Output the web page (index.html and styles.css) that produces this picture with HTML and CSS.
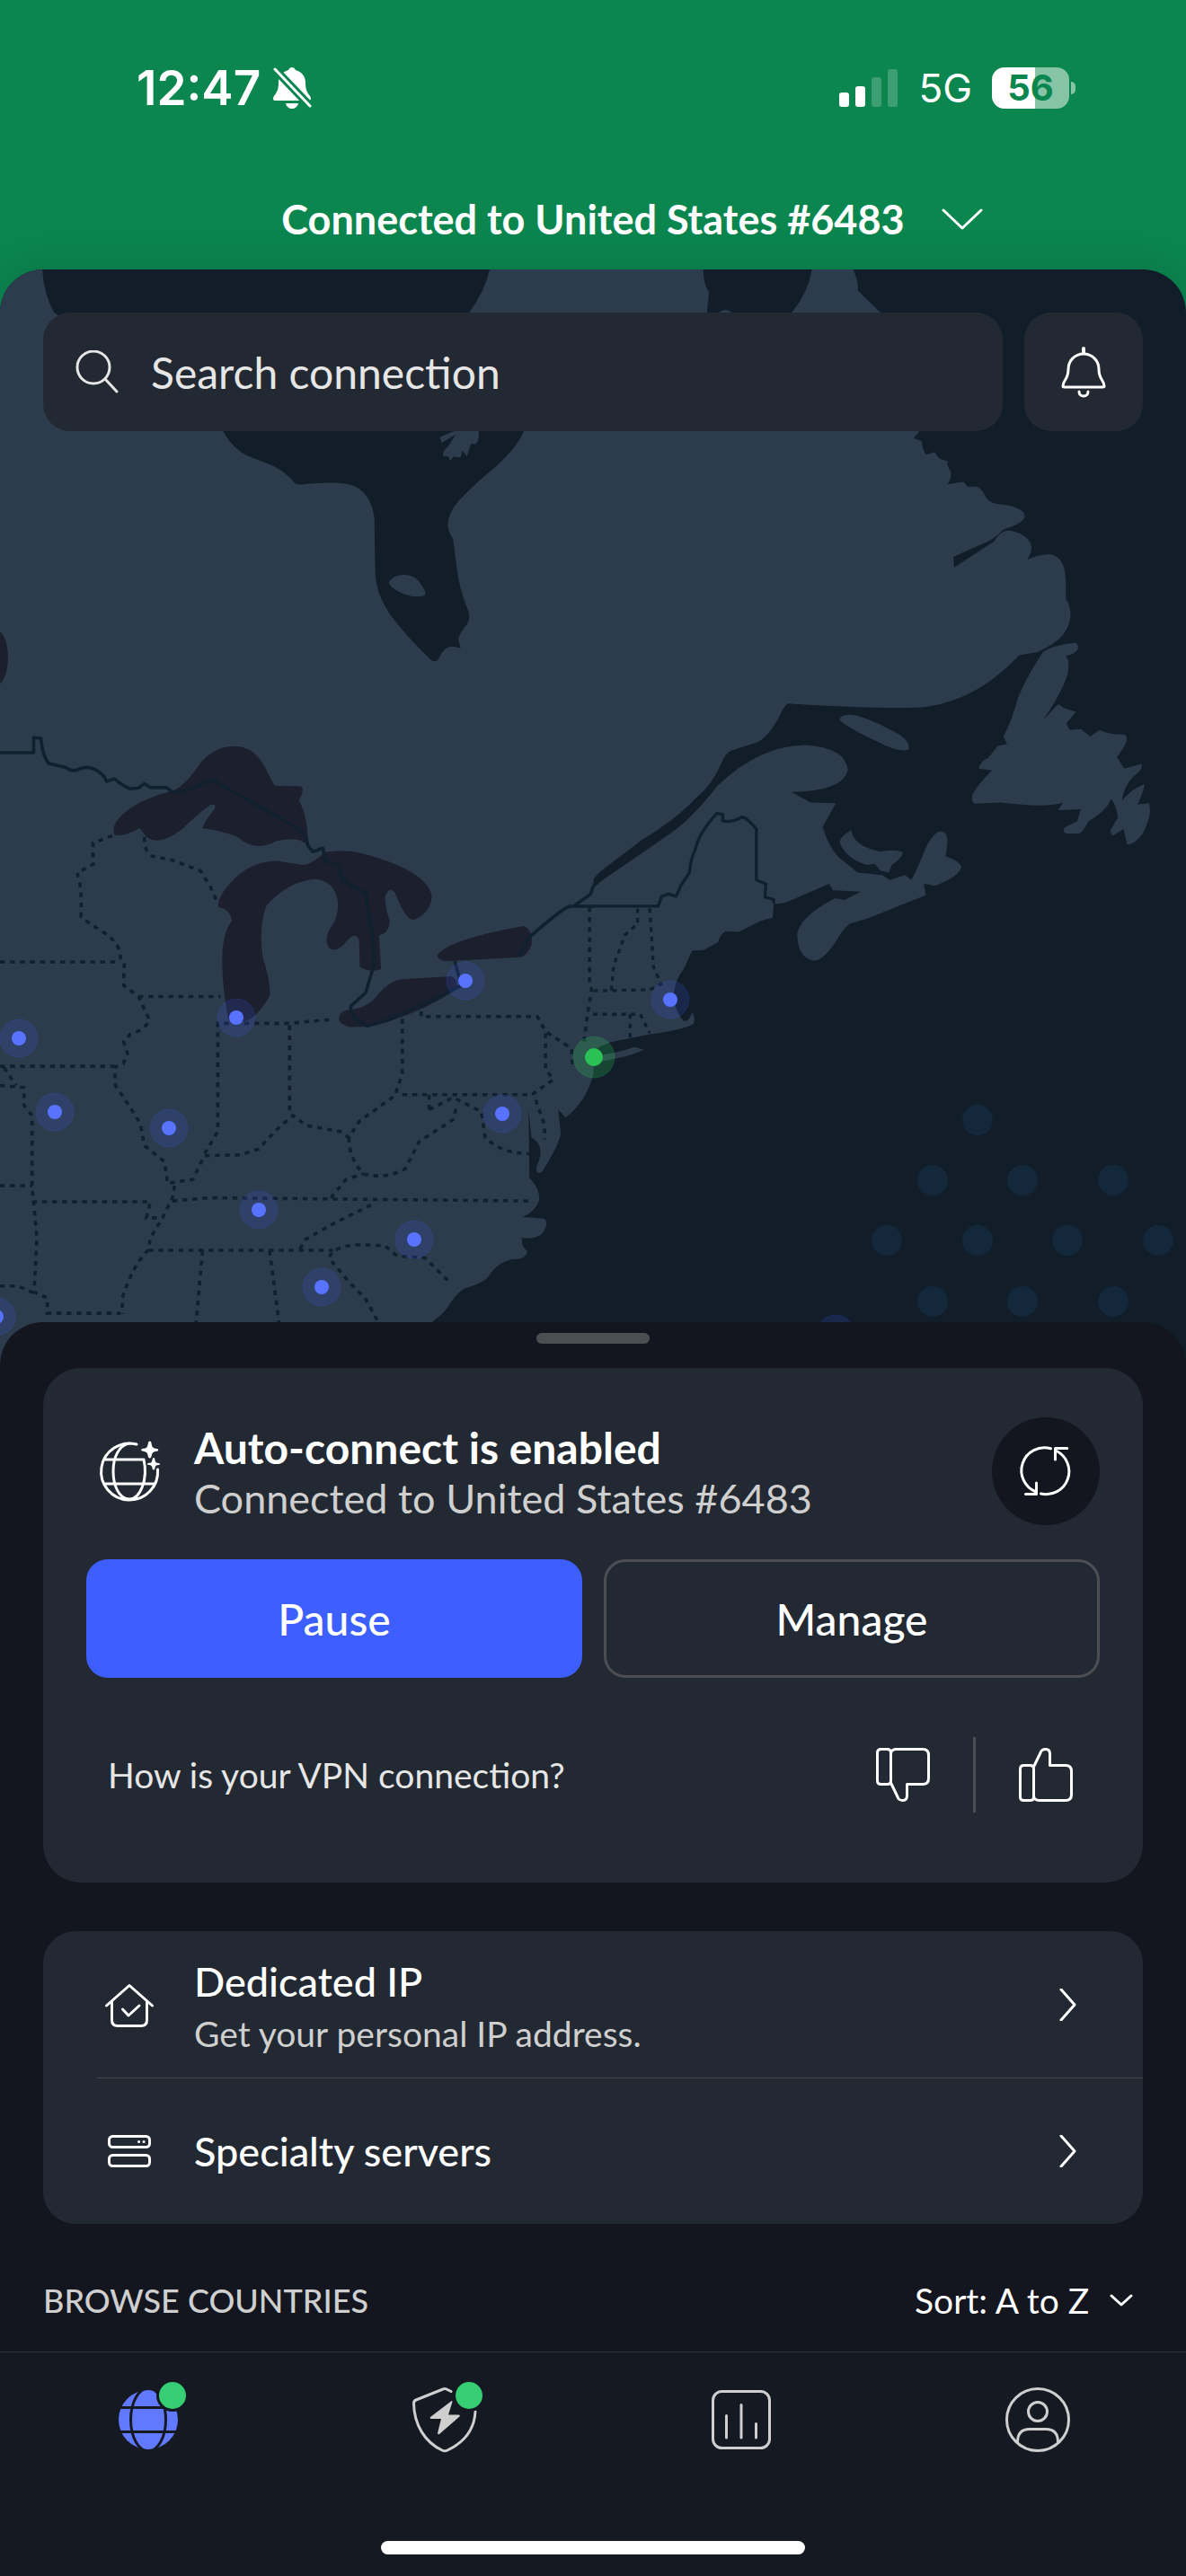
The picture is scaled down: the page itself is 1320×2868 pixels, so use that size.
FILE: index.html
```html
<!DOCTYPE html>
<html lang="en">
<head>
<meta charset="utf-8">
<meta name="viewport" content="width=device-width, initial-scale=1">
<title>VPN connection</title>
<link rel="stylesheet" href="styles.css">
</head>
<body>
<header class="header">
  <div class="status">
    <span class="status-time">12:47</span>
    <svg class="status-bell" width="44" height="48" viewBox="0 0 44 48" aria-label="Silent mode">
      <path fill="#fff" d="M22 1c2 0 3 1 4 3 7 2 11 7 11 14 0 8 2 11 5 15 2 3 1 5-2 5H4c-3 0-4-2-2-5 3-4 5-7 5-15C7 11 11 6 18 4c1-2 2-3 4-3zM15 41h14c-1 4-4 6-7 6s-6-2-7-6z"/>
      <path stroke="#0b864f" stroke-width="9" d="M0 0 44 46"/>
      <path stroke="#fff" stroke-width="3" stroke-linecap="round" d="M3 3 42 44"/>
    </svg>
    <span class="status-gap"></span>
    <svg class="status-signal" width="66" height="42" viewBox="0 0 66 42" aria-label="Signal strength">
      <g fill="#fff"><rect y="26" width="11" height="16" rx="3"/><rect x="18" y="19" width="11" height="23" rx="3"/><g opacity=".2"><rect x="36" y="9" width="11" height="33" rx="3"/><rect x="54" width="11" height="42" rx="3"/></g></g>
    </svg>
    <span class="status-net">5G</span>
    <span class="battery"><span class="battery-level">56</span></span>
  </div>
  <button class="title" type="button">
    <span class="title-text">Connected to United States #6483</span>
    <svg width="72" height="72" viewBox="0 0 72 72" class="line"><path d="m15 26 21 20 21-20"/></svg>
  </button>
</header>

<main class="main">
  <section class="map">
    <svg class="map-art" viewBox="0 300 1320 1220" preserveAspectRatio="xMidYMin slice" role="img" aria-label="Server map">
      <!-- mainland -->
      <g class="land">
        <path transform="translate(0 780) scale(.4464)" d="M1480-1100V930Q1462 1000 1410 1040L1392 1020 1398 1080Q1395 1105 1352 1175 1335 1185 1338 1162 1362 1110 1325 1090L1318 1020 1320 1190Q1345 1215 1345 1245 1335 1275 1303 1288L1355 1292Q1370 1300 1355 1325 1340 1345 1300 1340L1303 1360 1315 1375Q1310 1395 1280 1393 1240 1400 1215 1440 1200 1455 1160 1465 1135 1480 1115 1515 1100 1535 1070 1555L1020 1680H-10V-1100Z"/>
        <path transform="translate(660 460) scale(.4209)" d="M-3-400H680Q705-345 700-325L760-266 830-20 862 50 848 66 870 75Q870 100 882 110L903 103 915 120 938 127Q935 140 946 155 948 175 937 188L980 182 990 194 1015 194Q1030 200 1040 225 1052 240 1085 242 1140 250 1142 273 1140 290 1085 308 1060 335 1020 350L953 380 955 408 1060 340Q1075 312 1100 310 1155 320 1160 355 1160 368 1148 388 1175 375 1205 373 1240 375 1248 420 1252 450 1250 490 1280 540 1240 590 1215 615 1175 632L1127 640Q1080 690 1025 725 960 765 880 777 800 785 515 768 505 775 495 798 465 855 435 870L365 893Q350 900 340 925 315 985 270 1020 225 1070 125 1132L25 1208Q3 1225-3 1243V1262Q10 1244 50 1218L200 1115Q260 1075 330 985 440 880 560 878 670 885 674 945 660 1000 525 1002L575 1030 642 1032 607 1095Q625 1150 650 1175L700 1215 765 1222 785 1235 825 1222 842 1235Q860 1200 880 1150 905 1100 925 1107 945 1112 932 1172 970 1185 974 1200 970 1225 905 1250L875 1245 880 1275 730 1335 680 1350Q665 1360 650 1385 610 1450 583 1448 540 1440 540 1375 550 1330 640 1283L665 1288 708 1266 635 1262 625 1245 520 1290Q500 1300 478 1297L475 1335Q440 1340 415 1358L385 1372 350 1370Q335 1380 330 1400L292 1420 262 1422 240 1470Q215 1500 213 1545 220 1590 240 1608 255 1610 262 1584 272 1600 266 1615 245 1630 150 1643L50 1663 20 1675-3 1690Z"/>
      </g>
      <!-- bays -->
      <g class="water">
        <path transform="translate(0 460) scale(.4209 .3333)" d="M112-480Q115-400 143-336L300-200 590 60Q610 110 650 140L720 175Q760 200 780 235 785 240 800 238 900 225 935 243 980 265 990 350L992 530Q993 600 1030 670 1070 740 1140 825 1152 835 1160 820 1175 775 1200 780L1218 785 1212 755Q1215 735 1235 705 1245 685 1238 660 1215 590 1208 520L1198 420Q1185 395 1184 375 1185 330 1215 290 1260 230 1310 180 1370 110 1385 60L1350-150 1240-336Q1280-400 1295-480Z"/>
        <path d="M783 298Q782 315 789 325L787 347 800 370 870 370 882 347Q900 325 904 298Z"/>
      </g>
      <!-- islands -->
      <g class="land">
        <path d="M796 352Q808 338 818 352Z"/>
        <path transform="translate(0 460) scale(.4209 .3333)" d="M1028 565Q1040 540 1070 540 1100 540 1115 575 1130 600 1122 610 1100 618 1070 605 1030 585 1028 565ZM1163 80 1200 60H1266Q1268 90 1258 103L1245 103 1235 145 1222 125 1218 148 1200 145 1190 160 1186 145 1172 145Q1168 130 1185 110L1205 72 1168 98Z"/>
        <g transform="translate(660 460) scale(.4209)">
          <path d="M652 810Q655 795 690 798 740 810 810 850 840 870 835 890 810 900 750 868 660 825 652 810Z"/>
          <path d="M1190 632Q1210 615 1275 607 1285 612 1282 625 1275 638 1250 642 1262 655 1255 690 1240 740 1190 812L1230 770 1245 780 1277 790 1252 820 1260 838 1290 836 1315 855 1340 838Q1360 850 1405 850 1425 860 1385 910L1405 940 1450 928Q1458 940 1430 960 1405 985 1398 1025 1430 990 1458 982 1460 990 1440 1035L1470 1032Q1480 1060 1455 1110 1430 1145 1412 1140L1403 1100 1375 1117Q1365 1112 1370 1100L1388 1070Q1385 1040 1370 1020 1360 1050 1310 1080 1295 1110 1285 1112L1250 1112Q1240 1105 1248 1095L1280 1080 1290 1048 1230 1050 1243 1030Q1200 1045 1080 1030L1010 1033Q1000 1028 1003 1010 1015 985 1055 945L1020 940Q1025 920 1045 912L1070 880 1095 875 1085 855Q1105 820 1125 750 1145 700 1190 632Z"/>
          <path d="M683 1103Q688 1145 760 1160 800 1152 820 1162 815 1180 790 1195L782 1215 760 1210 745 1192 725 1195Q670 1180 652 1135 655 1118 683 1103Z"/>
          <path d="M0 1715V1700Q60 1695 110 1677L135 1684Q100 1700 60 1707L0 1719Z"/>
        </g>
      </g>
      <!-- lakes and borders -->
      <ellipse class="lake" cx="-6" cy="732" rx="15" ry="32"/>
      <g transform="translate(0 780) scale(.4464)">
        <g class="lake">
          <path d="M285 335Q275 310 310 280 350 245 430 225 460 215 500 155 540 110 590 114 640 115 670 185L685 212 750 214Q762 220 745 248 768 290 768 360L745 347Q715 343 690 350 645 375 605 350 585 330 505 318 510 300 535 270 540 255 525 260 490 285 455 320 400 365 365 340L348 318Q310 340 285 335Z"/>
          <path d="M545 515Q540 495 570 460 620 400 690 400L755 410Q775 410 810 378 850 370 900 380 1070 425 1077 490 1070 535 1030 547 1010 545 985 480 970 460 960 490 960 515 972 550 970 580 945 585L950 670Q925 680 897 665L895 595Q885 575 865 600 840 630 822 618 805 595 825 565 845 540 842 500 835 450 785 445 720 450 665 510 645 560 655 640 675 700 673 735 655 770 630 790 600 810 570 795 550 700 555 620 560 570 578 550 575 520 545 515Z"/>
          <path d="M845 795Q845 770 880 770 920 765 945 730 970 700 1000 695L1125 688Q1150 700 1130 725 1060 770 990 793 930 818 870 814 845 805 845 795Z"/>
          <path d="M1090 635Q1120 595 1305 562 1330 570 1325 610 1315 635 1300 640L1110 650Q1090 645 1090 635Z"/>
        </g>
        <g class="border">
          <path d="M0 130H84V92L102 94Q106 140 122 157L165 167Q180 180 200 170 230 158 260 190L266 202 285 195Q310 215 325 220L345 218 360 207 375 217H415L430 228 460 226 530 198 745 320Q765 335 768 362L780 377 805 368 810 400 848 412 850 445 912 482Q915 520 925 560 935 620 932 660L912 728 875 762Q870 790 915 812 1000 790 1150 710L1134 650M1295 635 1320 590Q1400 520 1420 513H1482M1430 513 1472 483 1482 456"/>
        </g>
        <g class="state">
          <path d="M280 337 232 355V408L192 430Q205 460 202 540L245 570Q300 600 300 640L310 655 308 710 345 738 372 795Q365 820 325 832L308 850 318 880 308 905 285 915 288 960 325 1015 350 1055 360 1110 410 1150 418 1205 440 1200 480 1195 510 1135 600 1133 645 1118 690 1070 730 1035 765 1060 850 1075 870 1090 895 1050 985 985 1003 930V790"/>
          <path d="M0 652H300M0 912H285M345 738H550M360 340Q360 380 380 388L430 398 500 425 525 465 540 500M510 1130 543 1075V805H722L830 795M722 810V1035"/>
          <path d="M870 1090Q870 1140 905 1180 960 1195 1010 1168L1045 1100 1130 1045 1140 1005M1003 983H1325M1070 1020V983M1070 1020 1130 990 1200 1025 1210 1090Q1250 1130 1320 1130M1050 775V788H1340L1360 825 1425 868 1428 920M1360 830V920L1380 945 1330 980 1358 1060V1095"/>
          <path d="M1470 515V700L1475 722 1465 780 1455 860M80 1250H375L365 1290H400M430 1248 520 1240 1320 1248M0 960 60 965V1010L80 1035V1210L92 1340 85 1475 118 1490V1528H300M0 1210H80M10 915 40 960M0 1460H45L85 1478"/>
          <path d="M435 1210 430 1240 405 1290 375 1340 370 1370Q330 1410 305 1490V1530M370 1371H830M505 1372 488 1560M672 1372 697 1560M825 1240 862 1195 905 1180M925 1258 830 1305 760 1345 748 1368M940 1545 910 1490 870 1450 820 1390Q830 1360 900 1357L960 1360 990 1385 1060 1390 1120 1450"/>
        </g>
      </g>
      <g transform="translate(660 460) scale(.4209)">
        <path class="border" d="M-6 1304H172L182 1278 200 1272 220 1278 232 1250 255 1215Q258 1180 270 1155 280 1110 328 1058L343 1062V1078Q365 1085 395 1068 410 1072 432 1100V1235L457 1245 455 1280 478 1287V1297"/>
        <path class="state" d="M118 1310V1350L85 1380 55 1460 48 1528M150 1310 160 1465 180 1510 150 1525 0 1528M0 1590H125L150 1640M98 1590V1655"/>
      </g>
      <!-- ocean dots -->
      <g class="dots">
        <circle cx="1088" cy="1247" r="17"/><circle cx="1038" cy="1314" r="17"/><circle cx="1138" cy="1314" r="17"/><circle cx="1239" cy="1314" r="17"/>
        <circle cx="987" cy="1381" r="17"/><circle cx="1088" cy="1381" r="17"/><circle cx="1188" cy="1381" r="17"/><circle cx="1289" cy="1381" r="17"/>
        <circle cx="1038" cy="1449" r="17"/><circle cx="1138" cy="1449" r="17"/><circle cx="1239" cy="1449" r="17"/>
      </g>
      <!-- server pins -->
      <g class="halo">
        <circle cx="21" cy="1156" r="21"/><circle cx="61" cy="1238" r="21"/><circle cx="188" cy="1256" r="21"/><circle cx="263" cy="1133" r="21"/><circle cx="518" cy="1092" r="21"/><circle cx="559" cy="1240" r="21"/><circle cx="288" cy="1347" r="21"/><circle cx="461" cy="1380" r="21"/><circle cx="358" cy="1433" r="21"/><circle cx="-4" cy="1466" r="21"/><circle cx="746" cy="1113" r="21"/><circle cx="930" cy="1485" r="21"/>
      </g>
      <g class="pin">
        <circle cx="21" cy="1156" r="8"/><circle cx="61" cy="1238" r="8"/><circle cx="188" cy="1256" r="8"/><circle cx="263" cy="1133" r="8"/><circle cx="518" cy="1092" r="8"/><circle cx="559" cy="1240" r="8"/><circle cx="288" cy="1347" r="8"/><circle cx="461" cy="1380" r="8"/><circle cx="358" cy="1433" r="8"/><circle cx="-4" cy="1466" r="8"/><circle cx="746" cy="1113" r="8"/>
      </g>
      <circle class="halo-on" cx="661" cy="1177" r="23"/><circle class="pin-on" cx="661" cy="1177" r="10"/>
    </svg>
    <div class="toolbar">
      <label class="search">
        <svg width="48" height="48" viewBox="0 0 48 48" class="line light"><circle cx="20" cy="19" r="18"/><path d="m33 32 13 14"/></svg>
        <input type="search" placeholder="Search connection" aria-label="Search connection">
      </label>
      <button class="bell" type="button" aria-label="Notifications">
        <svg width="72" height="72" viewBox="0 0 72 72" class="line"><path stroke-width="4" d="M36 10v5"/><path d="M36 16C26 16 19 24 19 33c0 12-6 12-6 19 0 1 1 1 2 1h42c1 0 2 0 2-1 0-7-6-7-6-19 0-9-7-17-17-17zM31 58c0 3 2 5 5 5s5-2 5-5"/></svg>
      </button>
    </div>
  </section>

  <section class="sheet">
    <div class="handle"></div>
    <article class="card">
      <div class="card-head">
        <svg width="72" height="72" viewBox="0 0 72 72" class="line">
          <path d="M44 6A31.500 31.500 0 1 0 67.500 34M9 23H52M9 50H64M36 5C24 7 18 21 18 36S24 67 36 67C48 67 57 45 52 23"/>
          <path fill="#fff" stroke="none" d="M58.700 2.500c2.500 0 1.500 5 3.500 7s6 .5 6 2.800-4 1-6 3-1 6.200-3.500 6.200-1.500-4.200-3.500-6.200-6-.7-6-3 4-.8 6-2.800 1-7 3.500-7zM63 21c2 0 1 3.500 2.500 5s4.500.3 4.500 2-3 .5-4.500 2-.5 4.500-2.500 4.500-1-3-2.500-4.500-4.500-.3-4.500-2 3-.5 4.500-2 .5-5 2.500-5z"/>
        </svg>
        <div class="card-text">
          <h1>Auto-connect is enabled</h1>
          <p>Connected to United States #6483</p>
        </div>
        <button class="sync" type="button" aria-label="Reconnect">
          <svg width="72" height="72" viewBox="0 0 72 72" class="line"><path d="M41.500 10.800A25.500 25.500 0 0 0 25 59M48 13.500A25.500 25.500 0 0 1 30.500 61M59.700 10.500H46.500V23M13.500 61.500H25.500V49"/></svg>
        </button>
      </div>
      <div class="actions">
        <button class="btn btn-primary" type="button">Pause</button>
        <button class="btn" type="button">Manage</button>
      </div>
      <div class="feedback">
        <p>How is your VPN connection?</p>
        <button type="button" class="icon-btn" aria-label="Bad connection">
          <svg width="72" height="72" viewBox="0 0 72 72" class="line"><path id="thumb" d="M11.500 7.500h7q4 0 4 4v31q0 4-4 4h-7q-4 0-4-4v-31q0-4 4-4zM22.500 12q1-4.500 6-4.500H58q6.500 0 6.500 6.500V40q0 6.500-6.500 6.500H40.500V59q0 5.500-4.500 5.500-5 0-6-4L22.500 45"/></svg>
        </button>
        <span class="rule"></span>
        <button type="button" class="icon-btn" aria-label="Good connection">
          <svg width="72" height="72" viewBox="0 0 72 72" class="line"><use href="#thumb" transform="matrix(1 0 0 -1 0 72)"/></svg>
        </button>
      </div>
    </article>

    <nav class="list">
      <a class="row" href="#dedicated-ip">
        <svg width="72" height="72" viewBox="0 0 72 72" class="line"><path d="M10.500 37 36 14.500 61.500 37M16.500 32V53q0 6.500 6.500 6.500H49q6.500 0 6.500-6.500V32M28.500 41l6.500 7 12-11"/></svg>
        <span class="row-text"><span class="row-title">Dedicated IP</span><span class="row-sub">Get your personal IP address.</span></span>
        <svg width="36" height="36" viewBox="0 0 36 36" class="line"><path d="m11 1 15 17-15 17"/></svg>
      </a>
      <a class="row" href="#specialty-servers">
        <svg width="72" height="72" viewBox="0 0 72 72" class="line"><rect x="13.500" y="19.500" width="45" height="12" rx="4"/><rect x="13.500" y="40.500" width="45" height="12" rx="4"/><path d="M46.500 25.500h.1M52 25.500h.1"/></svg>
        <span class="row-text"><span class="row-title">Specialty servers</span></span>
        <svg width="36" height="36" viewBox="0 0 36 36" class="line"><path d="m11 1 15 17-15 17"/></svg>
      </a>
    </nav>

    <div class="browse">
      <h2>BROWSE COUNTRIES</h2>
      <label class="sort">
        <select aria-label="Sort countries"><option>Sort: A to Z</option></select>
        <svg width="48" height="48" viewBox="0 0 48 48" class="line"><path d="m13 19 11 10 11-10"/></svg>
      </label>
    </div>
  </section>
</main>

<nav class="tabs">
  <div class="tabs-row">
    <a href="#vpn" aria-label="VPN">
      <svg width="72" height="72" viewBox="0 0 72 72">
        <circle cx="36" cy="36" r="33" fill="#6079ff"/>
        <path fill="none" stroke="#151a22" stroke-width="3" d="M0 22.500H72M0 49.500H72"/><ellipse cx="36" cy="36" rx="19.500" ry="35" fill="none" stroke="#151a22" stroke-width="3"/>
        <circle cx="63" cy="9" r="18" fill="#151a22"/><circle cx="63" cy="9" r="15" fill="#35ce72"/>
      </svg>
    </a>
    <a href="#threat-protection" aria-label="Threat protection">
      <svg width="72" height="72" viewBox="0 0 72 72">
        <path class="muted" d="M43 4.500 38 2q-2-1-4 0L4 14Q1.500 15 1.500 18C2 42 14 61 33 70q3 1.500 6 0C58 61 69 46 70 27"/>
        <path fill="#cfcfcf" d="M43 15.500 20 33q-1 1.500 1 2h11L28 51q.5 2 2 1L52.500 32.500q1-2-1-2H40L44.500 16q0-1.500-1.500-.5z"/>
        <circle cx="63" cy="9" r="18" fill="#151a22"/><circle cx="63" cy="9" r="15" fill="#35ce72"/>
      </svg>
    </a>
    <a href="#stats" aria-label="Statistics">
      <svg width="72" height="72" viewBox="0 0 72 72"><g class="muted"><rect x="4.500" y="4.500" width="63" height="63" rx="10"/><path d="M19.500 31.500V56M36 19.500V56M52.500 40.500V56"/></g></svg>
    </a>
    <a href="#profile" aria-label="Profile">
      <svg width="72" height="72" viewBox="0 0 72 72"><g class="muted"><circle cx="36" cy="36" r="34.500"/><circle cx="36" cy="27" r="10.500"/><path d="M13.500 61V60Q14 46.500 27 46.500H45Q58 46.500 58.500 60V61"/></g></svg>
    </a>
  </div>
  <div class="home-bar"></div>
</nav>
</body>
</html>
```
FILE: styles.css
```css
* { box-sizing: border-box; margin: 0; }

body {
  display: flex;
  flex-direction: column;
  min-height: 100vh;
  background: #0b864f;
  color: #fff;
  font-family: Lato, "Liberation Sans", sans-serif;
  font-size: 45px;
}

button, input, select {
  border: 0;
  padding: 0;
  background: none;
  color: inherit;
  font: inherit;
}
a { color: inherit; text-decoration: none; }
svg { display: block; flex: none; }

.line {
  fill: none;
  stroke: #fff;
  stroke-width: 3;
  stroke-linecap: round;
  stroke-linejoin: round;
}
.light { stroke: #e6e6e6; }

/* header */
.header { display: flex; flex-direction: column; height: 300px; }
.status {
  display: flex;
  align-items: center;
  padding: 66px 130px 0 152px;
  line-height: 64px;
  font-family: Inter, "Liberation Sans", sans-serif;
}
.status-time { font-size: 53px; font-weight: 600; }
.status-bell { margin-left: 13px; }
.status-gap { flex: 1; }
.status-net { margin: 0 22px; font-size: 44px; font-weight: 400; }
.battery {
  position: relative;
  width: 86px;
  height: 46px;
  border-radius: 14px;
  background: linear-gradient(90deg, #fff 56%, #87c4a6 56%);
  color: #0b864f;
  font-size: 40px;
  font-weight: 700;
  line-height: 46px;
  text-align: center;
}
.battery::after {
  content: "";
  position: absolute;
  left: 88px;
  top: 16px;
  width: 5px;
  height: 14px;
  border-radius: 0 5px 5px 0;
  background: #87c4a6;
}
.title {
  display: grid;
  grid-template-columns: 1fr auto 1fr;
  align-items: center;
  column-gap: 28px;
  margin-top: 78px;
  font-weight: 700;
}
.title-text { grid-column: 2; }

/* map */
.main { display: flex; flex: 1; flex-direction: column; }
.map {
  position: relative;
  flex: 1;
  min-height: 600px;
  padding: 48px;
  border-radius: 48px 48px 0 0;
  overflow: hidden;
  background: #111d28;
  box-shadow: 0 0 48px rgba(17, 29, 40, .2);
}
.map-art { position: absolute; inset: 0; width: 100%; height: 100%; }
.land { fill: #2d3c4c; }
.water { fill: #111d28; }
.lake { fill: #1c1f2e; }
.border { fill: none; stroke: #10202f; stroke-width: 8; stroke-linejoin: round; }
.state { fill: none; stroke: #10202f; stroke-width: 8; stroke-dasharray: 12 13; }
.dots { fill: #14283b; }
.halo { fill: #3e5fff; fill-opacity: .16; stroke: #3e5fff; stroke-opacity: .16; stroke-width: 1; }
.pin { fill: #5873ff; }
.halo-on { fill: #2bc155; fill-opacity: .25; stroke: #2bc155; stroke-opacity: .2; }
.pin-on { fill: #2bc155; }

.toolbar { position: relative; display: flex; gap: 24px; }
.search, .bell {
  height: 132px;
  border-radius: 30px;
  background: #232932;
}
.search { display: flex; flex: 1; align-items: center; gap: 36px; padding: 0 36px; }
.search input { flex: 1; min-width: 0; font-size: 48px; outline: 0; }
.search input::placeholder { color: #e6e6e6; opacity: 1; }
.bell { display: grid; place-items: center; width: 132px; }

/* bottom sheet */
.sheet {
  position: relative;
  margin-top: -48px;
  padding: 12px 48px 24px;
  border-radius: 48px 48px 0 0;
  background: #13161f;
}
.handle { width: 126px; height: 12px; margin: 0 auto 27px; border-radius: 6px; background: #4d4e52; }
.card { padding: 55px 48px 78px; border-radius: 42px; background: #232932; }
.card-head { display: flex; align-items: center; gap: 36px; padding-left: 12px; }
.card-text { flex: 1; padding-top: 3px; line-height: 56px; }
.card-text h1 { font-size: 48px; font-weight: 700; }
.card-text p { color: #cfcfcf; }
.sync { display: grid; place-items: center; width: 120px; height: 120px; border-radius: 50%; background: #13161f; }
.actions { display: grid; grid-template-columns: 1fr 1fr; gap: 24px; margin-top: 38px; }
.btn, .row-title, .browse h2 { font-family: "Lato Medium", Lato, "Liberation Sans", sans-serif; font-weight: 500; }
.btn { height: 132px; border: 3px solid #4d4e52; border-radius: 24px; font-size: 48px; }
.btn-primary { border-color: #3e5fff; background: #3e5fff; }
.feedback { display: flex; align-items: center; gap: 42px; margin-top: 66px; padding: 0 24px; }
.feedback p { flex: 1; color: #e6e6e6; font-size: 39px; }
.rule { width: 3px; height: 84px; background: #4d4e52; }

.list { margin-top: 54px; border-radius: 36px; background: #232932; }
.row { display: flex; align-items: center; gap: 36px; height: 163px; margin-left: 60px; padding-right: 66px; }
.row + .row { border-top: 1px solid #45484d; }
.row-text { display: flex; flex: 1; flex-direction: column; }
.row-title { line-height: 64px; }
.row-sub { color: #cfcfcf; font-size: 39px; line-height: 52px; }

.browse { display: flex; align-items: center; justify-content: space-between; padding-top: 52px; line-height: 66px; }
.browse h2 { color: #cfcfcf; font-size: 36px; }
.sort { display: flex; align-items: center; gap: 9px; font-size: 39px; }
.sort select { appearance: none; }

/* tab bar */
.tabs { padding: 39px 0 24px; border-top: 1px solid #33373e; background: #151a22; }
.tabs-row { display: grid; grid-template-columns: repeat(4, 1fr); justify-items: center; }
.tabs-row svg { overflow: visible; }
.muted { fill: none; stroke: #cfcfcf; stroke-width: 3; stroke-linecap: round; stroke-linejoin: round; }
.home-bar { width: 472px; height: 15px; margin: 99px auto 0; border-radius: 8px; background: #fff; }
```
